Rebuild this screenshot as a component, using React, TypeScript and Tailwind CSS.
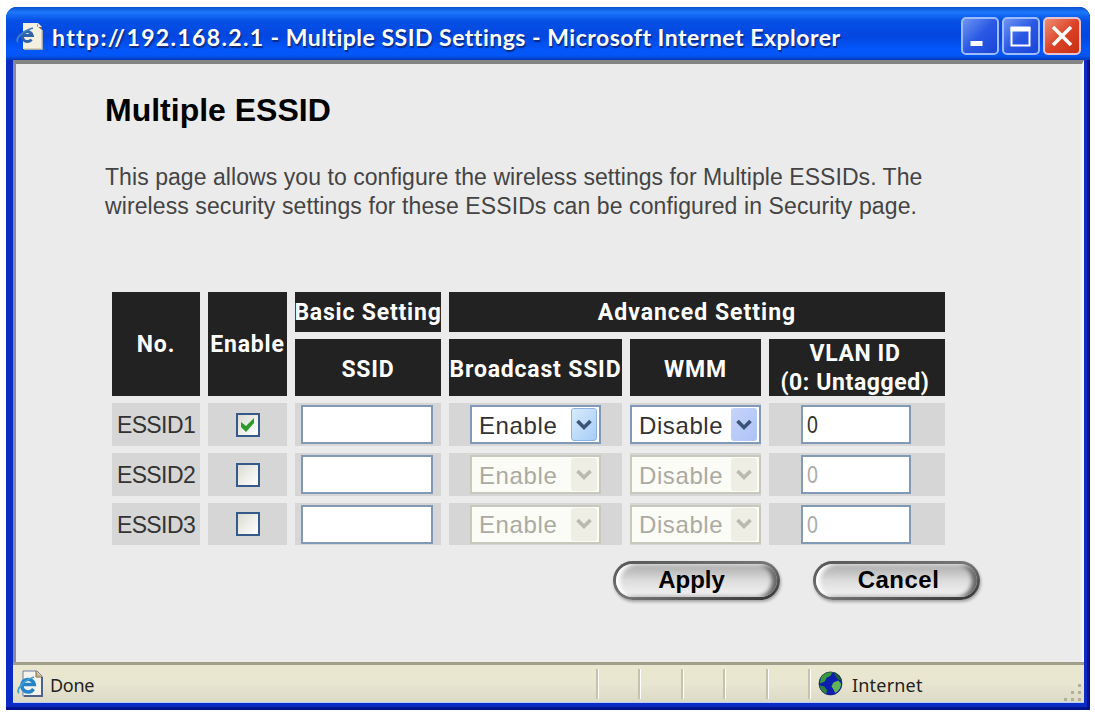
import type { ReactNode } from "react";

const rows = [
  { id: "ESSID1", enabled: true },
  { id: "ESSID2", enabled: false },
  { id: "ESSID3", enabled: false },
];

function PageIcon({ className }: { className: string }) {
  return (
    <svg viewBox="0 0 28 28" className={className} aria-hidden>
      <path d="M7 1h14l5 5v20H7z" fill="#f4f4ec" stroke="#6d7fa8" strokeWidth="1" />
      <path d="M20 1v6h6" fill="#c9b58e" stroke="#8a6a48" />
      <path d="M26 7v19H8" fill="none" stroke="#50608c" strokeWidth="2" />
      <path
        d="M17.5 19a6.3 6.3 0 1 1 .8-4.5H7.5"
        fill="none"
        stroke="#2583c9"
        strokeWidth="3.4"
      />
      <path
        d="M3 23c-3-3 3-12 15-16"
        fill="none"
        stroke="#3fa0cf"
        strokeWidth="1.8"
      />
    </svg>
  );
}

function TitleIcon({ className }: { className: string }) {
  return (
    <svg viewBox="0 0 28 28" className={className} aria-hidden>
      <path d="M7 1h15l4 4v22H7z" fill="#f3f0e0" />
      <path d="M22 1v4h4v3l-5-4z" fill="#8a5a3c" />
      <path d="M26 8v19H8" fill="none" stroke="#cfc6a4" strokeWidth="1.5" />
      <path
        d="M15.5 17.500a5 5 0 1 1 .8-4H7"
        fill="none"
        stroke="#2f62ad"
        strokeWidth="3"
      />
      <path d="M2 20c-3-3 4-11 15-14" fill="none" stroke="#3f7fc4" strokeWidth="1.8" />
    </svg>
  );
}

function Globe() {
  return (
    <svg viewBox="0 0 26 26" className="h-[25px] w-[25px]" aria-hidden>
      <circle cx="13" cy="13" r="12" fill="#0d1fae" />
      <path d="M3 6C6 2 11 0 15 1l-2 4-4 2-2 4-5 2z" fill="#3b9a3c" />
      <path d="M16 1c5 1 8 5 9 9l-4-1-3-4z" fill="#1f5f3a" />
      <path d="M16 12l5-2 3 3c0 4-2 8-6 10l-2-4-2-3z" fill="#5fb557" />
      <path d="M1.500 15l5 1 3 4-1 4C5 23 2 19 1.500 15z" fill="#2f8340" />
      <circle cx="13" cy="13" r="12" fill="none" stroke="#1b2b50" strokeOpacity="0.6" />
    </svg>
  );
}

function TitleButton({ red, children }: { red?: boolean; children: ReactNode }) {
  return (
    <button
      className={
        red
          ? "h-[38px] w-[38px] rounded-[5px] border-2 border-[#e6c3d4] bg-linear-to-br from-[#ec8b72] via-[#dd4326] to-[#c62f12]"
          : "h-[38px] w-[38px] rounded-[5px] border-2 border-[#9dbcff] bg-linear-to-br from-[#6f93f2] via-[#2a58e4] to-[#1a45d8]"
      }
    >
      <svg viewBox="0 0 34 34" className="h-full w-full" fill="none" stroke="#fff">
        {children}
      </svg>
    </button>
  );
}

function Head({ className, children }: { className?: string; children: ReactNode }) {
  return (
    <div
      className={`flex items-center justify-center bg-[#222] text-center font-[Roboto,sans-serif] text-[23px] leading-[29px] font-bold tracking-[0.8px] whitespace-nowrap text-white ${className ?? ""}`}
    >
      {children}
    </div>
  );
}

function Cell({ children }: { children?: ReactNode }) {
  return <div className="flex items-center justify-center bg-[#d6d6d6]">{children}</div>;
}

function Checkbox({ checked }: { checked: boolean }) {
  return (
    <span className="block h-6 w-6 border-2 border-[#35598a] bg-linear-to-br from-[#dcdcd4] to-white">
      {checked && (
        <svg viewBox="0 0 20 20" className="h-5 w-5" aria-hidden>
          <path d="M3 7l5 4 8-8v5l-8 9-5-5z" fill="#2b9a2b" />
        </svg>
      )}
    </span>
  );
}

function Select({ value, enabled, blue }: { value: string; enabled: boolean; blue?: boolean }) {
  return (
    <div
      className={`flex h-[39px] w-[131px] shrink-0 items-center justify-between border-2 pr-0.5 pl-[7px] text-2xl tracking-[0.6px] ${
        enabled ? "border-[#8099b5] bg-white text-[#333]" : "border-[#c8c8bc] bg-[#fcfcf6] text-[#aaaaa2]"
      }`}
    >
      <span className="pt-0.5">{value}</span>
      <span
        className={`flex h-[33px] w-[26px] items-center justify-center rounded-[3px] ${
          !enabled
            ? "bg-[#eeeee4]"
            : blue
              ? "bg-linear-to-br from-[#c6d4fb] to-[#adc2f6]"
              : "border border-[#8fb2e2] bg-linear-to-br from-[#d9eafc] to-[#a5cdf8]"
        }`}
      >
        <svg
          viewBox="0 0 16 12"
          className="h-3 w-4"
          fill="none"
          stroke={enabled ? "#3a5377" : "#b9b9ae"}
          strokeWidth="3.6"
        >
          <path d="M1.500 2L8 8.500 14.500 2" />
        </svg>
      </span>
    </div>
  );
}

function PillButton({ className, children }: { className: string; children: string }) {
  return (
    <button className="h-[39px] w-[167px] rounded-full bg-linear-to-br from-[#555] via-[#777] to-[#333] p-[3px] shadow-[1px_2px_3px_rgba(0,0,0,0.3)]">
      <span
        className={`flex h-full items-center justify-center rounded-full bg-linear-to-b from-[#aaa] via-[#dcdcdc] to-[#f4f4f4] pb-0.5 text-2xl font-bold text-black shadow-[inset_4px_1px_4px_#fff,inset_-5px_0_4px_#666] ${className}`}
      >
        {children}
      </span>
    </button>
  );
}

export default function App() {
  return (
    <div className="h-[712px] w-[1095px] overflow-hidden bg-white pt-[7px] pl-[6px] font-['Liberation_Sans',Arial,sans-serif]">
      <div className="flex h-[703px] w-[1084px] flex-col rounded-t-[11px] bg-[#0a2bc4] shadow-[inset_-3px_-3px_0_#04128c]">
        <header className="flex h-[53px] shrink-0 items-center rounded-t-[11px] bg-[linear-gradient(180deg,#0a50cf_0%,#1c78fa_10%,#0651e6_25%,#0346e0_55%,#0357fb_80%,#0355f5_92%,#0238b8_100%)] pr-[9px] pl-[10px]">
          <TitleIcon className="mt-1 h-7 w-7" />
          <h2 className="ml-2 flex-1 pt-2 font-[Lato,sans-serif] text-[23px] font-bold tracking-[0.5px] whitespace-nowrap text-white [text-shadow:1px_2px_1px_#0a2a80]">
            <span className="tracking-[1.35px]">http://192.168.2.1</span>
            {" - Multiple SSID Settings - Microsoft Internet Explorer"}
          </h2>
          <div className="flex gap-[3px] pt-[5px]">
            <TitleButton>
              <path d="M7.500 24.500h12" strokeWidth="5" />
            </TitleButton>
            <TitleButton>
              <path d="M7.500 9.500h18v17h-18z" strokeWidth="2" />
              <path d="M6.500 10h20" strokeWidth="5" />
            </TitleButton>
            <TitleButton red>
              <path d="M8 8l18 18M26 8L8 26" strokeWidth="3.5" />
            </TitleButton>
          </div>
        </header>

        <div className="mr-[6px] mb-[7px] ml-[7px] flex min-h-0 flex-1 flex-col">
          <main className="flex-1 border-t-4 border-r-2 border-l-[3px] border-t-[#858585] border-r-[#eef6ff] border-l-[#858ba8] bg-[#ebebeb]">
            <div className="ml-[89px] w-[840px] pt-[26px]">
              <h1 className="text-[32px] leading-10 font-bold text-black">Multiple ESSID</h1>
              <p className="mt-[33px] text-[23px] leading-[29px] tracking-[0.06px] whitespace-nowrap text-[#444]">
                This page allows you to configure the wireless settings for Multiple ESSIDs. The
                <br />
                <span className="tracking-[0.1px]">
                  wireless security settings for these ESSIDs can be configured in Security page.
                </span>
              </p>
            </div>

            <div className="mt-[71px] ml-[96px] grid w-[833px] grid-cols-[88px_79px_146px_173px_131px_176px] grid-rows-[40px_57px_43px_43px_42px] gap-x-2 gap-y-[7px]">
              <Head className="row-span-2">No.</Head>
              <Head className="row-span-2">Enable</Head>
              <Head>Basic Setting</Head>
              <Head className="col-span-3">
                <span className="tracking-[1px]">Advanced Setting</span>
              </Head>
              <Head className="pt-1">SSID</Head>
              <Head className="pt-1">Broadcast SSID</Head>
              <Head className="pt-1">WMM</Head>
              <Head className="pr-1">
                <span className="tracking-[0.6px]">
                  VLAN ID
                  <br />
                  (0: Untagged)
                </span>
              </Head>
              {rows.map(({ id, enabled }) => (
                <div key={id} className="contents">
                  <Cell>
                    <span className="pt-0.5 text-[23px] tracking-[-0.6px] text-[#333]">{id}</span>
                  </Cell>
                  <Cell>
                    <Checkbox checked={enabled} />
                  </Cell>
                  <Cell>
                    <span className="mr-0.5 h-[39px] w-[132px] border-2 border-[#8099b5] bg-white" />
                  </Cell>
                  <Cell>
                    <Select value="Enable" enabled={enabled} />
                  </Cell>
                  <Cell>
                    <Select value="Disable" enabled={enabled} blue />
                  </Cell>
                  <Cell>
                    <span
                      className={`mr-0.5 flex h-[39px] w-[110px] items-center border-2 border-[#8099b5] bg-white pt-0.5 pl-1 text-[23px] ${
                        enabled ? "text-[#333]" : "text-[#aaa]"
                      }`}
                    >
                      <span className="origin-left scale-x-85">0</span>
                    </span>
                  </Cell>
                </div>
              ))}
            </div>

            <div className="mt-[16px] ml-[597px] flex gap-[33px]">
              <PillButton className="pr-2.5">Apply</PillButton>
              <PillButton className="pl-1 tracking-[0.5px]">Cancel</PillButton>
            </div>
          </main>

          <footer className="flex h-[41px] shrink-0 items-center border-t-[3px] border-b border-t-[#a09f8c] border-b-[#b8cdf5] bg-linear-to-b from-[#eae7cf] via-[#e8e6d0] to-[#dcdac6] pl-[3px] font-['Noto_Sans',sans-serif] text-[18px] text-[#222]">
            <PageIcon className="h-7 w-7" />
            <span className="ml-[6px] w-[546px] pt-1 tracking-[-0.3px]">Done</span>
            <div className="flex h-[30px]">
              {[0, 1, 2, 3, 4].map((i) => (
                <span key={i} className="w-[42.400px] border-l-2 border-[#c6c3ac] shadow-[inset_1px_0_0_#fff]" />
              ))}
              <span className="w-[10px] border-l-2 border-[#c6c3ac] shadow-[inset_1px_0_0_#fff]" />
            </div>
            <Globe />
            <span className="ml-[9px] flex-1 pt-1 tracking-[0.2px]">Internet</span>
            <svg viewBox="0 0 20 20" className="mt-4 mr-px h-5 w-5" fill="#b3af98" aria-hidden>
              <path d="M15 2h3v3h-3zM15 9h3v3h-3zM15 16h3v3h-3zM8 9h3v3H8zM8 16h3v3H8zM1 16h3v3H1z" />
            </svg>
          </footer>
        </div>
      </div>
    </div>
  );
}
